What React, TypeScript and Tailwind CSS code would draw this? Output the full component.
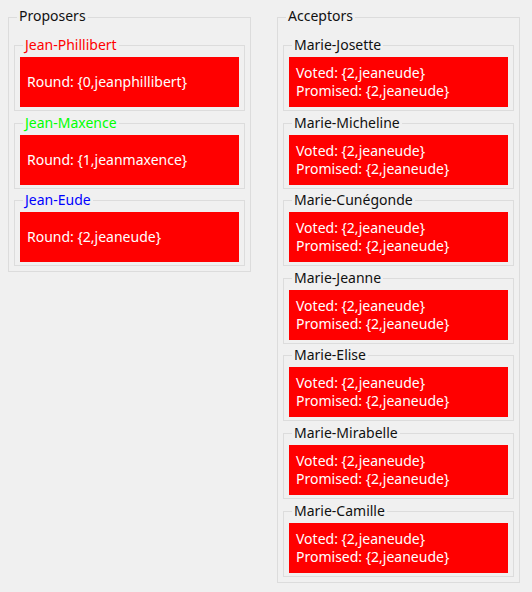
import React from "react";

type Prop = { name: string; color: string; round: string };
const proposers: Prop[] = [
  { name: "Jean-Phillibert", color: "text-[#ff0000]", round: "{0,jeanphillibert}" },
  { name: "Jean-Maxence", color: "text-[#00ff00]", round: "{1,jeanmaxence}" },
  { name: "Jean-Eude", color: "text-[#0000ff]", round: "{2,jeaneude}" },
];
const acceptors = [
  "Marie-Josette",
  "Marie-Micheline",
  "Marie-Cunégonde",
  "Marie-Jeanne",
  "Marie-Elise",
  "Marie-Mirabelle",
  "Marie-Camille",
];
const gaps = ["mt-0", "mt-[12px]", "mt-[11px]", "mt-[12px]", "mt-[11px]", "mt-[12px]", "mt-[12px]"];

function Label({ children, className = "" }: { children: React.ReactNode; className?: string }) {
  return (
    <div className={`absolute left-[8px] px-[2px] bg-[#f0f0f0] leading-[18px] whitespace-nowrap ${className}`}>
      {children}
    </div>
  );
}

function Inner({ title, titleColor, mt, children }: { title: string; titleColor: string; mt: string; children: React.ReactNode }) {
  return (
    <div className={`relative border border-[#dcdcdc] pt-[11px] pb-[3px] px-[5px] ${mt}`}>
      <Label className={`top-[-10px] ${titleColor}`}>{title}</Label>
      <div className="h-[50px] bg-[#ff0000] text-white">{children}</div>
    </div>
  );
}

export default function App() {
  return (
    <div className="w-[532px] h-[592px] bg-[#f0f0f0] flex items-start gap-[26px] pl-[8px] pt-[17px] text-[14px] font-['Segoe_UI','Noto_Sans',sans-serif] text-[#111111]">
      <div className="relative w-[243px] border border-[#dcdcdc] pt-[27px] pb-[5px] px-[5px]">
        <Label className="top-[-11px] text-[#111111]">Proposers</Label>
        {proposers.map((p, i) => (
          <Inner key={p.name} title={p.name} titleColor={p.color} mt={gaps[i]}>
            <div className="h-full flex items-center pl-[7px] leading-[18px]">Round: {p.round}</div>
          </Inner>
        ))}
      </div>
      <div className="relative w-[243px] border border-[#dcdcdc] pt-[27px] pb-[5px] px-[5px]">
        <Label className="top-[-11px] text-[#111111]">Acceptors</Label>
        {acceptors.map((a, i) => (
          <Inner key={a} title={a} titleColor="text-[#111111]" mt={gaps[i]}>
            <div className="h-full flex flex-col justify-center pl-[7px] leading-[18px]">
              <div>Voted: {"{2,jeaneude}"}</div>
              <div>Promised: {"{2,jeaneude}"}</div>
            </div>
          </Inner>
        ))}
      </div>
    </div>
  );
}
